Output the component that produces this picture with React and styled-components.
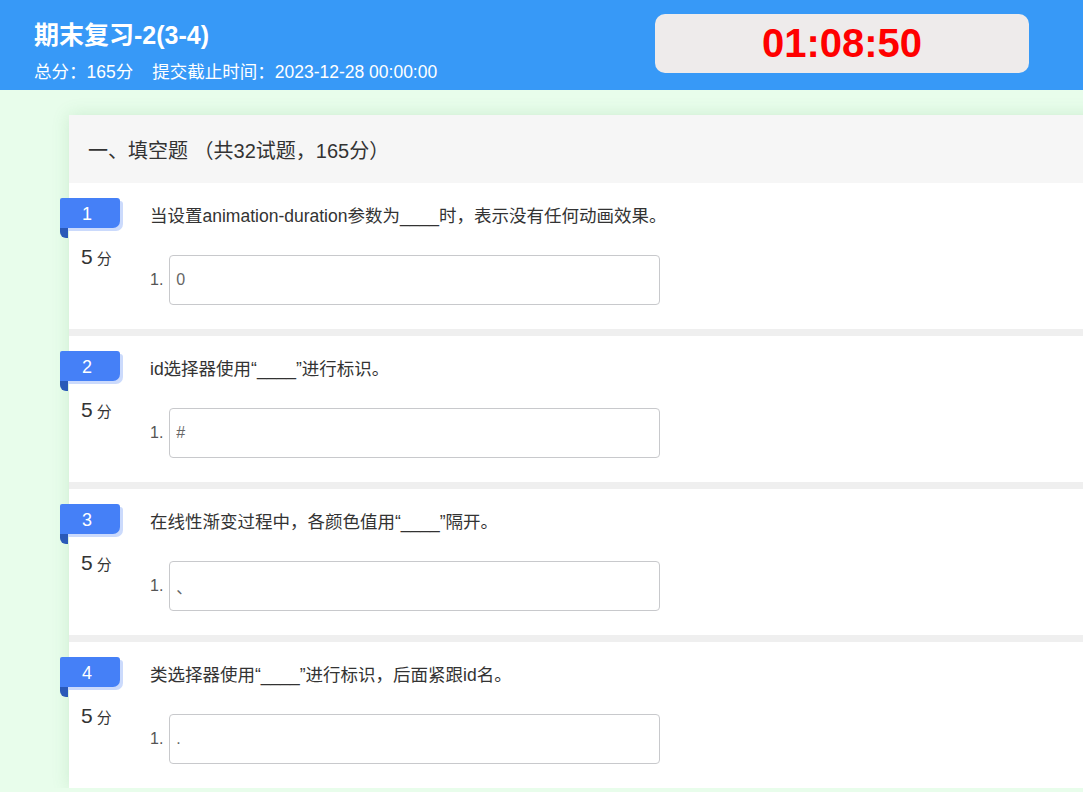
import styled, { createGlobalStyle } from "styled-components";

const questions = [
    { id: 1, stem: "当设置animation-duration参数为____时，表示没有任何动画效果。", answer: "0", score: 5 },
    { id: 2, stem: "id选择器使用“____”进行标识。", answer: "#", score: 5 },
    { id: 3, stem: "在线性渐变过程中，各颜色值用“____”隔开。", answer: "、", score: 5 },
    { id: 4, stem: "类选择器使用“____”进行标识，后面紧跟id名。", answer: ".", score: 5 },
];

export default function App() {
    return (
        <>
            <GlobalStyle />
            <Header>
                <Info>
                    <Title>期末复习-2(3-4)</Title>
                    <Meta>
                        <span>总分：165分</span>
                        <span>提交截止时间：2023-12-28 00:00:00</span>
                    </Meta>
                </Info>
                <Timer>01:08:50</Timer>
            </Header>
            <Main>
                <Card>
                    <SectionTitle>一、填空题 （共32试题，165分）</SectionTitle>
                    <List>
                        {questions.map(q => (
                            <Question key={q.id}>
                                <Badge>{q.id}</Badge>
                                <Side>
                                    <Score>{q.score}<small>分</small></Score>
                                </Side>
                                <Body>
                                    <Stem>{q.stem}</Stem>
                                    <AnswerRow>
                                        <Index>1.</Index>
                                        <Input defaultValue={q.answer} readOnly />
                                    </AnswerRow>
                                </Body>
                            </Question>
                        ))}
                    </List>
                </Card>
            </Main>
        </>
    );
}

const GlobalStyle = createGlobalStyle`
    body {
        margin: 0;
        background-color: #e8fdeb;
        font-family: "Liberation Sans", "Noto Sans CJK SC", sans-serif;
        overflow: hidden;
    }
`;

const Header = styled.header`
    height: 90px;
    background-color: #3799f7;
    display: flex;
    align-items: flex-start;
    padding-left: 34px;
    box-sizing: border-box;
`;

const Info = styled.div`
    width: 621px;
    color: #ffffff;
    padding-top: 20px;
`;

const Title = styled.h1`
    margin: 0;
    font-size: 25px;
    font-weight: bold;
    line-height: 30px;
`;

const Meta = styled.div`
    margin-top: 11px;
    font-size: 17.5px;
    line-height: 22px;
    display: flex;
    gap: 19px;
`;

const Timer = styled.div`
    margin-top: 14px;
    width: 374px;
    height: 59px;
    border-radius: 10px;
    background-color: #eeebeb;
    color: #ff0000;
    font-size: 40px;
    font-weight: bold;
    display: flex;
    align-items: center;
    justify-content: center;
`;

const Main = styled.main`
    padding: 25px 0 0 69px;
`;

const Card = styled.section`
    width: 1060px;
    background-color: #efefef;
    box-shadow: 0 0 16px rgba(80, 160, 90, 0.18);
`;

const SectionTitle = styled.h2`
    margin: 0;
    height: 68px;
    padding-left: 19px;
    background-color: #f6f6f6;
    color: #333333;
    font-size: 20px;
    font-weight: normal;
    display: flex;
    align-items: center;
`;

const List = styled.div`
    display: flex;
    flex-direction: column;
    gap: 7px;
`;

const Question = styled.div`
    position: relative;
    height: 146px;
    background-color: #ffffff;
    display: flex;
`;

const Badge = styled.div`
    position: absolute;
    left: -9px;
    top: 15px;
    width: 60px;
    height: 30px;
    background-color: #4580f7;
    border-radius: 2px 3px 7px 0;
    box-shadow: 3px 3px 0 #cbdafc;
    color: #ffffff;
    font-size: 18px;
    line-height: 33px;
    text-align: center;
    text-indent: -6px;

    &::after {
        content: "";
        position: absolute;
        left: 0;
        top: 30px;
        width: 8px;
        height: 10px;
        background-color: #2a59b8;
        border-radius: 0 0 0 6px;
    }
`;

const Side = styled.div`
    width: 81px;
    padding: 62px 0 0 12px;
    box-sizing: border-box;
`;

const Score = styled.div`
    color: #333333;
    font-size: 21px;

    small {
        font-size: 15px;
        margin-left: 4px;
    }
`;

const Body = styled.div`
    padding-top: 21px;
`;

const Stem = styled.p`
    margin: 0;
    color: #333333;
    font-size: 17.5px;
    line-height: 24px;
`;

const AnswerRow = styled.div`
    margin-top: 27px;
    display: flex;
    align-items: center;
    gap: 6px;
`;

const Index = styled.span`
    color: #555555;
    font-size: 16px;
`;

const Input = styled.input`
    width: 491px;
    height: 50px;
    box-sizing: border-box;
    border: 1px solid #c8c9cc;
    border-radius: 4px;
    padding: 0 6px;
    color: #666666;
    font-size: 16px;
    font-family: inherit;
    outline: none;
`;
